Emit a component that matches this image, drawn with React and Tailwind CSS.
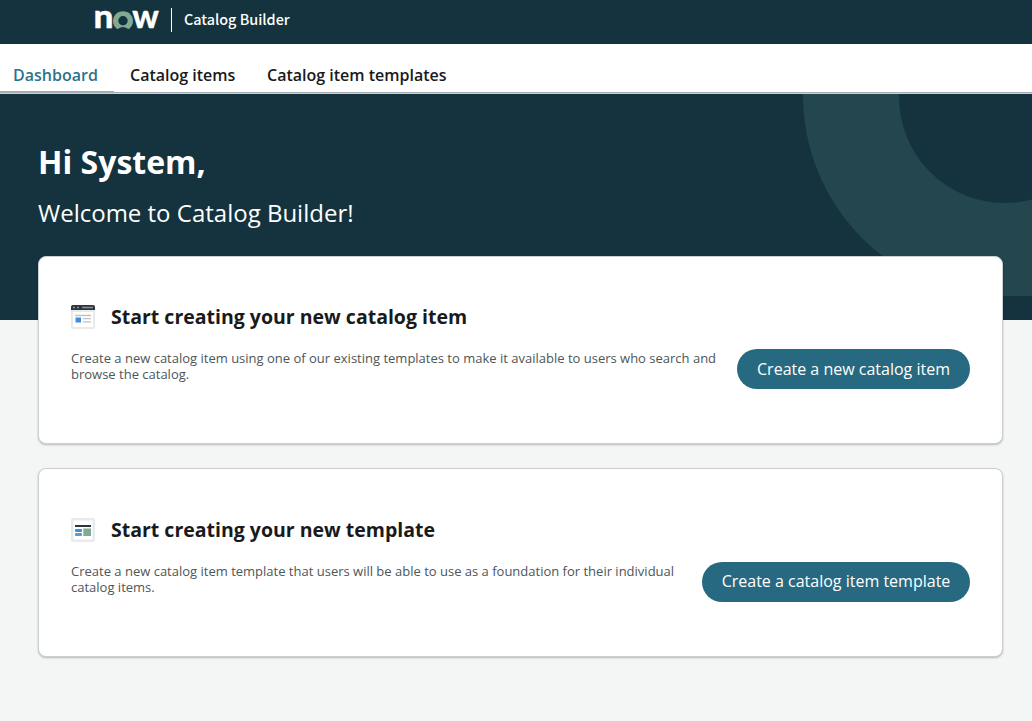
import React from 'react';

function Logo() {
  return (
    <svg width="68" height="44" viewBox="-2 0 68 44" className="block">
      <text x="-1.6" y="28" fontFamily="Lato, sans-serif" fontWeight="900" fontSize="31.5" fill="#fff" stroke="#fff" strokeWidth="0.3" textLength="20" lengthAdjust="spacingAndGlyphs">n</text>
      <path
        fillRule="evenodd"
        fill="#80ab92"
        d="M28 11.2A9.8 9.8 0 0 0 21.2 28.2A1.8 1.8 0 0 0 23.6 28.5A6.8 6.8 0 0 1 32.4 28.5A1.8 1.8 0 0 0 34.8 28.2A9.8 9.8 0 0 0 28 11.2ZM28 25.4A4.7 4.7 0 1 1 28 16A4.7 4.7 0 0 1 28 25.4Z"
      />
      <text x="37.2" y="28" fontFamily="Lato, sans-serif" fontWeight="900" fontSize="31.5" fill="#fff" stroke="#fff" strokeWidth="0.3" textLength="26.6" lengthAdjust="spacingAndGlyphs">w</text>
    </svg>
  );
}

function ItemIcon() {
  return (
    <svg width="24" height="24" viewBox="0 0 24 24" className="block">
      <rect width="24" height="24" rx="2" fill="#e8ebec" />
      <path d="M0 5V2a2 2 0 0 1 2-2h20a2 2 0 0 1 2 2v3z" fill="#2b363b" />
      <path d="M2 2.5h2M6 2.5h2M11 2.5h11" stroke="#8b9396" strokeWidth="1.4" />
      <rect x="2" y="7" width="20" height="15" fill="#fff" />
      <path d="M4 10.5h16M12 13.7h8M12 16.8h8" stroke="#bfc1c4" strokeWidth="1.3" />
      <rect x="4.5" y="12.5" width="5.5" height="5" fill="#3c8fdd" />
    </svg>
  );
}

function TemplateIcon() {
  return (
    <svg width="24" height="24" viewBox="0 0 24 24" className="block">
      <rect width="24" height="24" rx="2" fill="#e8ebec" />
      <rect x="2.5" y="2.5" width="19" height="19" fill="#fff" />
      <rect x="4" y="7" width="16" height="2" fill="#2b363b" />
      <rect x="4" y="11" width="7" height="3" rx="1" fill="#3c8fdd" />
      <rect x="4" y="15" width="7" height="3" rx="1" fill="#5b9bd0" />
      <rect x="12.3" y="10.5" width="7.7" height="7.5" fill="#80ab92" />
    </svg>
  );
}

function Card({ icon, title, text, action, size, textWidth, buttonWidth }) {
  return (
    <section className={`flex items-start justify-between rounded-lg border border-[#cbcfcf] bg-white px-8 shadow-[0_1px_2px_rgba(0,0,0,0.25)] ${size}`}>
      <div className={textWidth}>
        <div className="flex items-center gap-4">
          {icon}
          <h2 className="text-[19.5px] leading-6 font-bold whitespace-nowrap">{title}</h2>
        </div>
        <p className="mt-[21px] text-[13px] leading-4 text-[#4d5659]">{text}</p>
      </div>
      <button className={`mt-11 h-10 shrink-0 rounded-full bg-[#276980] text-center text-base leading-6 whitespace-nowrap text-white ${buttonWidth}`}>
        {action}
      </button>
    </section>
  );
}

export default function App() {
  return (
    <div className="flex h-[721px] w-[1032px] flex-col overflow-hidden bg-[#f4f6f6] font-['Open_Sans',sans-serif] text-[#181a1b]">
      <header className="flex h-11 shrink-0 items-start bg-[#14333e] pl-[93px]">
        <Logo />
        <div className="mt-2 ml-2.5 h-6 w-px bg-white" />
        <span className="mt-2 ml-3 font-['Noto_Sans_CJK_SC',sans-serif] text-[14.4px] leading-[22px] font-medium text-white">Catalog Builder</span>
      </header>
      <nav className="flex h-[50px] shrink-0 border-b border-[#cbd2d2] bg-white text-base font-semibold shadow-[inset_0_-1px_0_#a5adb0]">
        <a className="h-12 w-[114px] border-b border-[#a5a9b0] pt-[19px] pl-[13px] leading-6 text-[#2a748c]">Dashboard</a>
        <a className="w-[137px] pt-[19px] pl-4 leading-6 whitespace-nowrap">Catalog items</a>
        <a className="pt-[19px] pl-4 leading-6 whitespace-nowrap">Catalog item templates</a>
      </nav>
      <div className="grid grow">
        <div className="col-start-1 row-start-1 flex h-[226px] justify-end bg-[#14333e]">
          <svg width="229" height="202" viewBox="803 94 229 202" className="block">
            <circle cx="1005" cy="95.3" r="202" fill="#24464f" />
            <rect x="1000" y="280" width="32" height="16" fill="#24464f" />
            <circle cx="1005" cy="97" r="106" fill="#14333e" />
          </svg>
        </div>
        <main className="col-start-1 row-start-1 pr-[29px] pl-[38px]">
          <h1 className="pt-[46px] text-[32px] leading-[44px] font-bold text-white">Hi System,</h1>
          <p className="mt-[13px] text-2xl leading-8 text-white">Welcome to Catalog Builder!</p>
          <div className="mt-[27px] flex flex-col gap-6">
            <Card
              icon={<ItemIcon />}
              title="Start creating your new catalog item"
              text="Create a new catalog item using one of our existing templates to make it available to users who search and browse the catalog."
              action="Create a new catalog item"
              size="h-[188px] pt-12"
              textWidth="w-[650px]"
              buttonWidth="w-[233px]"
            />
            <Card
              icon={<TemplateIcon />}
              title="Start creating your new template"
              text="Create a new catalog item template that users will be able to use as a foundation for their individual catalog items."
              action="Create a catalog item template"
              size="h-[189px] pt-[49px]"
              textWidth="w-[615px]"
              buttonWidth="w-[268px] pb-0.5"
            />
          </div>
        </main>
      </div>
    </div>
  );
}
